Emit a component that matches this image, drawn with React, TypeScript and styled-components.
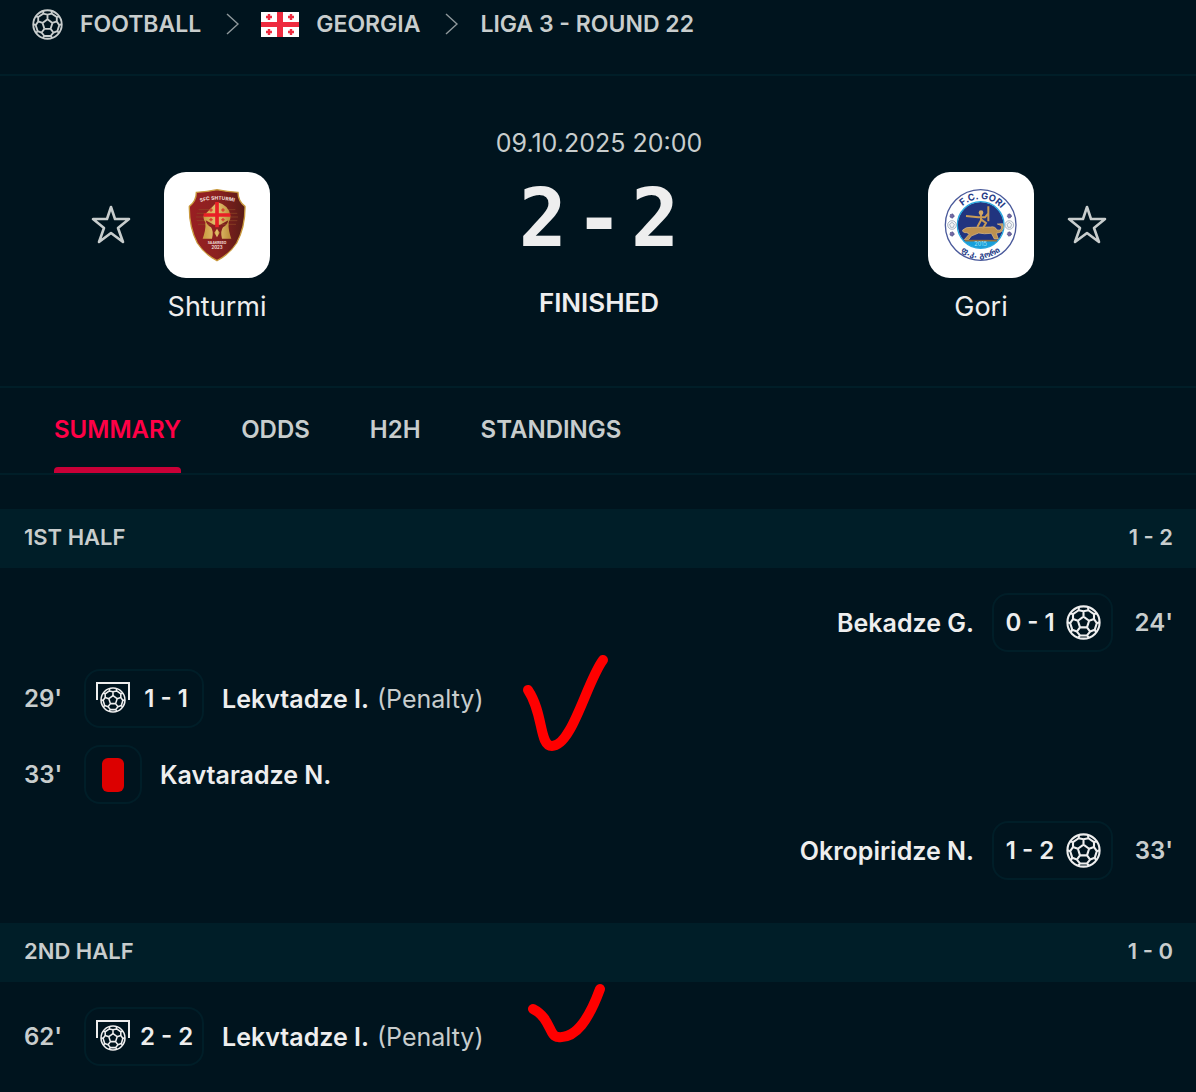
import React from "react";
import styled, { createGlobalStyle } from "styled-components";

const colors = {
  page: "#00141e",
  band: "#001e28",
  line: "#001e28",
  text: "#c8cdcd",
  bright: "#eeeeee",
  accent: "#ff0046",
  accentBar: "#c80037",
  card: "#dc0000",
  mark: "#ff0000",
};

const GlobalStyle = createGlobalStyle`
  * { box-sizing: border-box; }
  body {
    margin: 0;
    background: ${colors.page};
    color: ${colors.text};
    font-family: Inter, "Liberation Sans", sans-serif;
    font-size: 24px;
    line-height: 32px;
  }
`;

const Page = styled.main`
  width: 100%;
  overflow: hidden;
`;

const Breadcrumbs = styled.nav`
  display: flex;
  align-items: flex-start;
  height: 76px;
  padding: 8px 32px 0;
  border-bottom: 2px solid ${colors.line};
`;

const CrumbList = styled.ol`
  display: flex;
  align-items: center;
  gap: 22px;
  margin: 0;
  padding: 0;
  list-style: none;
`;

const Crumb = styled.li`
  display: flex;
  align-items: center;
  gap: 24px;
`;

const CrumbLink = styled.a`
  display: flex;
  align-items: center;
  gap: 17px;
  color: inherit;
  font-size: 23px;
  font-weight: 600;
  text-decoration: none;
  white-space: nowrap;
`;

const Match = styled.section`
  display: grid;
  grid-template-columns: 1fr 240px 1fr;
  height: 312px;
  padding: 51px 86px 0 88px;
  border-bottom: 2px solid ${colors.line};
`;

const Side = styled.div<{ $away?: boolean }>`
  display: flex;
  flex-direction: ${(p) => (p.$away ? "row-reverse" : "row")};
  align-items: flex-start;
  gap: 14px;
  padding-top: 45px;
`;

const StarButton = styled.button`
  display: flex;
  align-items: center;
  height: 106px;
  padding: 0 2px;
  border: 0;
  background: none;
  color: ${colors.text};
  cursor: pointer;
`;

const Team = styled.a`
  display: flex;
  flex-direction: column;
  align-items: center;
  gap: 13px;
  width: 138px;
  color: ${colors.bright};
  font-size: 27px;
  text-decoration: none;
`;

const Crest = styled.span`
  display: flex;
  align-items: center;
  justify-content: center;
  width: 106px;
  height: 106px;
  border-radius: 22px;
  background: #ffffff;
`;

const Result = styled.div`
  display: flex;
  flex-direction: column;
  align-items: center;
  font-size: 25px;
  white-space: nowrap;
`;

const Score = styled.div`
  display: flex;
  gap: 8px;
  margin: 12px 0 20px;
  color: ${colors.bright};
  font-family: "DejaVu Sans Mono", monospace;
  font-size: 80px;
  font-weight: 700;
  line-height: 96px;
`;

const Status = styled.div`
  color: ${colors.bright};
  font-size: 26px;
  font-weight: 600;
`;

const Tabs = styled.nav`
  display: flex;
  gap: 60px;
  height: 87px;
  padding: 0 54px;
  border-bottom: 2px solid ${colors.line};
`;

const Tab = styled.a<{ $active?: boolean }>`
  display: flex;
  align-items: center;
  position: relative;
  padding-bottom: 2px;
  color: ${(p) => (p.$active ? colors.accent : colors.text)};
  font-weight: 600;
  text-decoration: none;

  &::after {
    content: "";
    position: absolute;
    right: 0;
    bottom: 0;
    left: 0;
    height: 6px;
    border-radius: 4px 4px 0 0;
    background: ${(p) => (p.$active ? colors.accentBar : "transparent")};
  }
`;

const Half = styled.section`
  padding-bottom: 43px;

  &:last-child {
    padding-bottom: 24px;
  }
`;

const HalfHeader = styled.h2`
  display: flex;
  align-items: center;
  justify-content: space-between;
  height: 59px;
  margin: 0 0 25px;
  padding: 0 23px 3px 24px;
  background: ${colors.band};
  font-size: 22px;
  font-weight: 600;
`;

const Events = styled.ul`
  display: flex;
  flex-direction: column;
  gap: 17px;
  margin: 0;
  padding: 0 23px 0 24px;
  list-style: none;
`;

const EventRow = styled.li<{ $away?: boolean }>`
  display: flex;
  flex-direction: ${(p) => (p.$away ? "row-reverse" : "row")};
  align-items: center;
  position: relative;
  height: 59px;
  font-weight: 600;
  white-space: nowrap;
`;

const Minute = styled.span<{ $away?: boolean }>`
  width: 60px;
  text-align: ${(p) => (p.$away ? "right" : "left")};
`;

const Badge = styled.span<{ $away?: boolean }>`
  display: flex;
  flex-direction: ${(p) => (p.$away ? "row-reverse" : "row")};
  align-items: center;
  gap: 10px;
  min-width: 58px;
  height: 59px;
  padding: 0 10px;
  border: 2px solid ${colors.line};
  border-radius: 16px;
  color: ${colors.bright};
`;

const BadgeScore = styled.span`
  width: 52px;
  text-align: center;
`;

const RedCard = styled.span`
  width: 22px;
  height: 34px;
  margin: 0 auto;
  border-radius: 6px;
  background: ${colors.card};
`;

const Player = styled.a`
  margin: 0 18px;
  color: ${colors.bright};
  font-size: 25px;
  text-decoration: none;
`;

const Note = styled.span`
  margin-left: -10px;
  font-size: 25px;
  font-weight: 400;
`;

const Mark = styled.svg`
  position: absolute;
  top: -16px;
  left: 496px;
  overflow: visible;
`;

function polar(radius: number, degrees: number) {
  const angle = (degrees * Math.PI) / 180;
  const x = Math.round(50 + radius * Math.sin(angle));
  const y = Math.round(50 - radius * Math.cos(angle));
  return `${x} ${y}`;
}

const seams = [0, 72, 144, 216, 288]
  .map((a) =>
    [
      `M${polar(17, a)}L${polar(17, a + 72)}`,
      `M${polar(17, a)}L${polar(32, a)}`,
      `M${polar(46, a - 17)}L${polar(38, a - 21)}L${polar(32, a)}L${polar(38, a + 21)}L${polar(46, a + 17)}`,
      `M${polar(38, a + 21)}L${polar(38, a + 51)}`,
    ].join("")
  )
  .join("");

function BallShape() {
  return (
    <g fill="none" stroke="currentColor" strokeWidth="6" strokeLinejoin="round">
      <circle cx="50" cy="50" r="46" />
      <path d={seams} />
    </g>
  );
}

function Ball({ size }: { size: number }) {
  return (
    <svg width={size} height={size} viewBox="0 0 100 100" aria-hidden="true">
      <BallShape />
    </svg>
  );
}

function PenaltyIcon() {
  return (
    <svg width="34" height="36" viewBox="0 0 34 36" aria-hidden="true">
      <path d="M1 19V2H33V19" fill="none" stroke="currentColor" strokeWidth="2" />
      <circle cx="17" cy="19" r="14" fill={colors.page} />
      <svg x="4" y="6" width="26" height="26" viewBox="0 0 100 100">
        <BallShape />
      </svg>
    </svg>
  );
}

function Chevron() {
  return (
    <svg width="14" height="24" viewBox="0 0 14 24" aria-hidden="true">
      <path d="M2 2 13 12 2 22" fill="none" stroke="#8f999c" strokeWidth="1.4" />
    </svg>
  );
}

function Star() {
  return (
    <svg width="42" height="42" viewBox="0 0 42 42" aria-hidden="true">
      <path
        d="M21 3 25 15H39L28 24 33 38 21 29 9 38 14 24 3 15H17Z"
        fill="none"
        stroke="currentColor"
        strokeWidth="2.6"
        strokeLinejoin="round"
      />
    </svg>
  );
}

function Flag() {
  const corners = [
    [8, 5],
    [30, 5],
    [8, 20],
    [30, 20],
  ];
  return (
    <svg width="38" height="25" viewBox="0 0 38 25" role="img" aria-label="Georgia flag">
      <path fill="#ffffff" d="M0 0H38V25H0Z" />
      <path fill="#ee2b3f" d="M16 0H22V25H16ZM0 10H38V15H0Z" />
      {corners.map(([x, y]) => (
        <path
          key={`${x}-${y}`}
          d={`M${x - 3} ${y}H${x + 3}M${x} ${y - 3}V${y + 3}`}
          stroke="#ee2b3f"
          strokeWidth="2.4"
        />
      ))}
    </svg>
  );
}

function ShturmiCrest() {
  return (
    <svg width="106" height="106" viewBox="0 0 318 318" role="img" aria-label="Shturmi">
      <defs>
        <linearGradient id="shield" x2="1">
          <stop offset="0" stopColor="#991f22" />
          <stop offset="0.5" stopColor="#8b2020" />
          <stop offset="1" stopColor="#571c16" />
        </linearGradient>
        <linearGradient id="gold" x2="1">
          <stop offset="0" stopColor="#c99a3e" />
          <stop offset="0.5" stopColor="#e5c272" />
          <stop offset="1" stopColor="#b98a35" />
        </linearGradient>
      </defs>
      <path
        d="M97 61Q130 60 159 53 190 60 222 61 222 88 243 103 244 165 218 213 197 246 159 266 121 246 100 213 75 165 76 103 97 88 97 61Z"
        fill="url(#shield)"
        stroke="#c9993d"
        strokeWidth="4"
      />
      <path
        d="M104 113H214M98 124H220M96 135H222M98 146H220M102 157H216"
        stroke="#8f4a26"
        strokeWidth="2"
      />
      <path
        d="M159 90Q196 100 199 131 201 141 194 150C192 170 197 186 202 200H174Q168 178 177 166 190 160 193 145L168 158H150L125 145Q128 160 141 166 150 178 144 200H116C121 186 126 170 124 150 117 141 119 131 119 131 122 100 159 90Z"
        fill="url(#gold)"
      />
      <path d="M159 170 167 182 159 196 151 182Z" fill="url(#gold)" />
      <path d="M159 90V166M119 129H199" stroke="#e81f26" strokeWidth="11" />
      <path
        d="M136 114H146M141 109V119M172 114H182M177 109V119M136 143H146M141 138V148M172 143H182M177 138V148"
        stroke="#d5402d"
        strokeWidth="4"
      />
      <path id="shturmiArc" d="M108 90Q159 76 212 90" fill="none" />
      <g fill="#f1dfd8" fontFamily="Inter, sans-serif" fontWeight="700" textAnchor="middle">
        <text fontSize="15">
          <textPath href="#shturmiArc" startOffset="50%">SFC SHTURMI</textPath>
        </text>
        <text x="159" y="216" fontSize="10">SAAKREBO</text>
        <text x="159" y="232" fontSize="13">2023</text>
      </g>
    </svg>
  );
}

function GoriCrest() {
  return (
    <svg width="106" height="106" viewBox="0 0 318 318" role="img" aria-label="Gori">
      <defs>
        <path id="goriTop" d="M79 160A79 79 0 0 1 237 160" />
        <path id="goriBottom" d="M60 160A98 98 0 0 0 256 160" />
        <clipPath id="goriDisc">
          <circle cx="158" cy="159" r="69" />
        </clipPath>
      </defs>
      <circle cx="158" cy="159" r="106" fill="#ffffff" stroke="#4a5a9b" strokeWidth="4" />
      <g clipPath="url(#goriDisc)">
        <path fill="#21347f" d="M80 80H240V240H80Z" />
        <path fill="#169fdb" d="M80 206H240V240H80Z" />
      </g>
      <circle cx="158" cy="159" r="70" fill="none" stroke="#26a8df" strokeWidth="4" />
      <path
        d="M104 174Q114 164 130 166L188 165Q201 162 207 174 224 177 220 161L208 156 224 155Q230 170 219 180L205 184 211 201H199L190 184Q168 187 152 183L130 192 122 203H109L124 186 116 182Q103 183 104 174Z"
        fill="#bd9150"
        stroke="#e2c187"
        strokeWidth="2"
      />
      <path d="M111 206H207" stroke="#927142" strokeWidth="5" />
      <path
        d="M114 132 151 136H171L181 124M159 122V145L148 165M160 143 174 153 164 170M181 103V148"
        fill="none"
        stroke="#c89b56"
        strokeWidth="6"
      />
      <circle cx="159" cy="122" r="7" fill="#d2a866" />
      <g fill="#253b86" fontWeight="700">
        <text fontFamily="Inter, sans-serif" fontSize="28" textAnchor="middle">
          <textPath href="#goriTop" startOffset="52%">F.C. GORI</textPath>
        </text>
        <text fontFamily="DejaVu Sans, sans-serif" fontSize="24" textAnchor="middle">
          <textPath href="#goriBottom" startOffset="50%">ფ.კ. გორი</textPath>
        </text>
      </g>
      <text x="158" y="223" fill="#a8e3f8" fontFamily="Inter, sans-serif" fontSize="17" textAnchor="middle">
        2015
      </text>
      {[72, 244].map((x) => (
        <g key={x}>
          <circle cx={x} cy="159" r="13" fill="#f4f6f8" stroke="#8999aa" strokeWidth="2" />
          <path
            d={`M${x - 7} 157 ${x} 151 ${x + 7} 157 ${x + 4} 166H${x - 4}Z`}
            fill="none"
            stroke="#8999aa"
            strokeWidth="2"
          />
          <circle cx={x} cy="132" r="6" fill="#7568a5" stroke="#343d78" strokeWidth="3" strokeDasharray="3 2" />
          <circle cx={x} cy="186" r="6" fill="#7568a5" stroke="#343d78" strokeWidth="3" strokeDasharray="3 2" />
        </g>
      ))}
    </svg>
  );
}

function TallTick() {
  return (
    <Mark width="92" height="104" viewBox="0 0 92 104" aria-hidden="true">
      <path
        d="M8 37C24 61 19 93 32 93 52 93 67 28 83 7"
        fill="none"
        stroke={colors.mark}
        strokeWidth="10"
        strokeLinecap="round"
      />
    </Mark>
  );
}

function ShortTick() {
  return (
    <Mark width="92" height="104" viewBox="0 0 92 104" aria-hidden="true">
      <path
        d="M13 18C31 27 29 46 38 46 56 48 69 28 80 -2"
        fill="none"
        stroke={colors.mark}
        strokeWidth="10"
        strokeLinecap="round"
      />
    </Mark>
  );
}

type MatchEvent = {
  minute: string;
  player: string;
  kind: "goal" | "penalty" | "red";
  score?: string;
  away?: boolean;
  mark?: React.ReactNode;
};

const halves: { title: string; score: string; events: MatchEvent[] }[] = [
  {
    title: "1ST HALF",
    score: "1 - 2",
    events: [
      { minute: "24'", player: "Bekadze G.", kind: "goal", score: "0 - 1", away: true },
      { minute: "29'", player: "Lekvtadze I.", kind: "penalty", score: "1 - 1", mark: <TallTick /> },
      { minute: "33'", player: "Kavtaradze N.", kind: "red" },
      { minute: "33'", player: "Okropiridze N.", kind: "goal", score: "1 - 2", away: true },
    ],
  },
  {
    title: "2ND HALF",
    score: "1 - 0",
    events: [
      { minute: "62'", player: "Lekvtadze I.", kind: "penalty", score: "2 - 2", mark: <ShortTick /> },
    ],
  },
];

function EventLine({ event }: { event: MatchEvent }) {
  return (
    <EventRow $away={event.away}>
      <Minute $away={event.away}>{event.minute}</Minute>
      <Badge $away={event.away}>
        {event.kind === "goal" && <Ball size={35} />}
        {event.kind === "penalty" && <PenaltyIcon />}
        {event.kind === "red" && <RedCard role="img" aria-label="Red card" />}
        {event.score && <BadgeScore>{event.score}</BadgeScore>}
      </Badge>
      <Player href="#player">{event.player}</Player>
      {event.kind === "penalty" && <Note>(Penalty)</Note>}
      {event.mark}
    </EventRow>
  );
}

const Summary = styled.div`
  padding-top: 34px;
`;

export default function App() {
  return (
    <Page>
      <GlobalStyle />
      <Breadcrumbs aria-label="Breadcrumb">
        <CrumbList>
          <Crumb>
            <CrumbLink href="#football">
              <Ball size={31} />
              FOOTBALL
            </CrumbLink>
            <Chevron />
          </Crumb>
          <Crumb>
            <CrumbLink href="#georgia">
              <Flag />
              GEORGIA
            </CrumbLink>
            <Chevron />
          </Crumb>
          <Crumb>
            <CrumbLink href="#liga-3">LIGA 3 - ROUND 22</CrumbLink>
          </Crumb>
        </CrumbList>
      </Breadcrumbs>

      <Match>
        <Side>
          <StarButton aria-label="Follow Shturmi">
            <Star />
          </StarButton>
          <Team href="#shturmi">
            <Crest>
              <ShturmiCrest />
            </Crest>
            Shturmi
          </Team>
        </Side>
        <Result>
          <time dateTime="2025-10-09T20:00">09.10.2025 20:00</time>
          <Score>
            <span>2</span>
            <span>-</span>
            <span>2</span>
          </Score>
          <Status>FINISHED</Status>
        </Result>
        <Side $away>
          <StarButton aria-label="Follow Gori">
            <Star />
          </StarButton>
          <Team href="#gori">
            <Crest>
              <GoriCrest />
            </Crest>
            Gori
          </Team>
        </Side>
      </Match>

      <Tabs aria-label="Match sections">
        <Tab href="#summary" $active aria-current="page">
          SUMMARY
        </Tab>
        <Tab href="#odds">ODDS</Tab>
        <Tab href="#h2h">H2H</Tab>
        <Tab href="#standings">STANDINGS</Tab>
      </Tabs>

      <Summary>
        {halves.map((half) => (
          <Half key={half.title}>
            <HalfHeader>
              <span>{half.title}</span>
              <span>{half.score}</span>
            </HalfHeader>
            <Events>
              {half.events.map((event) => (
                <EventLine key={event.minute + event.player} event={event} />
              ))}
            </Events>
          </Half>
        ))}
      </Summary>
    </Page>
  );
}
